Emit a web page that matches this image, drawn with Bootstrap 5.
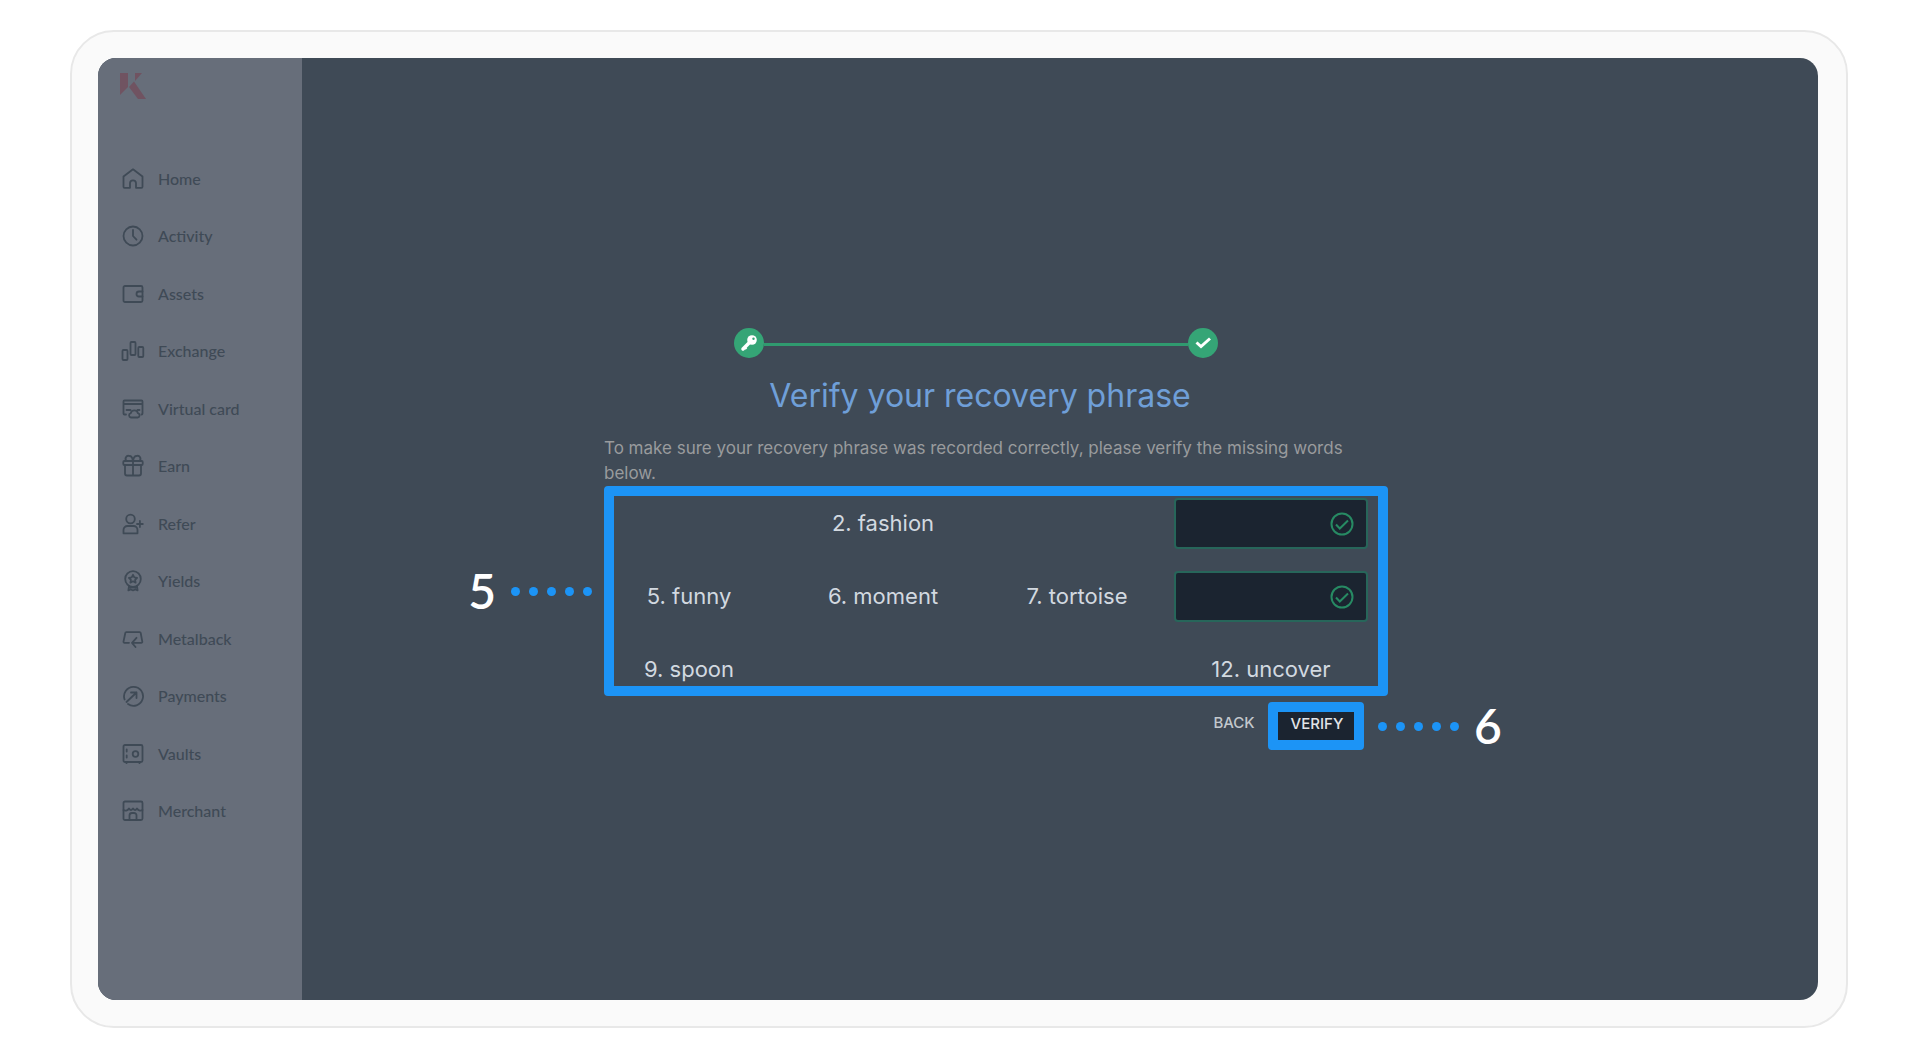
<!DOCTYPE html>
<html lang="en">
<head>
<meta charset="utf-8">
<meta name="viewport" content="width=device-width, initial-scale=1">
<title>Verify your recovery phrase</title>
<link href="https://cdn.jsdelivr.net/npm/bootstrap@5.3.0/dist/css/bootstrap.min.css" rel="stylesheet">
<style>
  body { background: #fff; font-family: Inter, "Open Sans", sans-serif; }
  .page { min-height: 100vh; padding: 30px 72px 30px 70px; }
  .device { border: 2px solid #e8e8e8; border-radius: 44px; background: #fafafa; padding: 26px 28px 26px 26px; }
  .screen { border-radius: 18px; background: #3f4a56; }
  .side { width: 204px; background: #676e7a; padding: 15px 22px; }
  .brand svg { width: 26px; height: 26px; display: block; }
  .side-nav { height: 690px; margin-top: 51px; padding-left: 1px; font: 500 16px/20px Lato, sans-serif; }
  .side-nav a { color: #3f4a56; gap: 13px; flex: 1 1 0; }
  .side-nav svg { width: 24px; height: 24px; fill: none; stroke: currentColor; stroke-width: 1.8; stroke-linecap: round; stroke-linejoin: round; }
  .stage { padding: 270px 160px 0 0; }
  .verify { width: 776px; }
  .steps { width: 484px; margin-left: 142px; }
  .step-dot { width: 30px; height: 30px; background: #35a576; }
  .step-dot svg { width: 18px; height: 18px; }
  .step-line { height: 3px; margin-top: 2px; background: #309a6f; }
  .verify h1 { font-size: 32px; line-height: 36px; font-weight: 400; color: #6f9fd8; margin: 20px 0 22px; }
  .intro { padding: 0 12px; margin-bottom: 12px; font-size: 17px; line-height: 25px; color: #999b9d; }
  .words { row-gap: 22px; font-size: 22px; color: #d2d9e0; }
  .word { height: 51px; }
  .word-input, .word-input:focus { height: 51px; border: 2px solid #27665a; border-radius: 4px; background: #1b2430; color: #d2d9e0; box-shadow: none; padding-right: 44px; }
  .word-ok { right: 14px; width: 24px; height: 24px; pointer-events: none; }
  .hl { border: 10px solid #1c94f6; border-radius: 4px; pointer-events: none; }
  .hl-words { inset: -12px -20px -1px 12px; }
  .hl-verify { inset: -4px -4px -8px -4px; }
  .callout { color: #fff; font: 600 48px/48px Lato, sans-serif; gap: 15px; top: 50%; transform: translateY(-50%); }
  .callout-start { right: 100%; margin-right: 22px; }
  .callout-end { left: 100%; margin-left: 24px; }
  .dots { gap: 9px; }
  .dots i { width: 9px; height: 9px; border-radius: 50%; background: #1c94f6; }
  .actions { margin-top: 11px; padding-right: 8px; gap: 10px; }
  .act { height: 34px; padding: 0; border: 0; border-radius: 3px; font-size: 15px; line-height: 34px; font-weight: 500; color: #c3c8cd; }
  .act-back { width: 56px; }
  .act-verify, .act-verify:hover { width: 88px; height: 36px; padding-left: 2px; background: #1b2430; color: #e2e5e8; }
</style>
</head>
<body>
<div class="page d-flex">
  <div class="device flex-grow-1 d-flex">
    <div class="screen flex-grow-1 d-flex overflow-hidden">
      <aside class="side flex-shrink-0">
        <a class="brand d-block" href="#" aria-label="Dashboard"><svg viewBox="0 0 26 26" fill="#705361"><path d="M0 0h8v14L0 22z"/><path d="M15 0h7l-7 8z"/><path d="M9 14l5-5.500L26 26h-8z"/></svg></a>
        <nav class="side-nav nav flex-column flex-nowrap" aria-label="Main">
          <a class="d-flex align-items-center text-decoration-none" href="#"><svg viewBox="0 0 24 24"><path d="M2.500 9.500L12 2.300l9.500 7.200v10.300a1 1 0 0 1-1 1H15v-4.500a3 3 0 0 0-6 0v4.500H3.500a1 1 0 0 1-1-1z"/></svg>Home</a>
          <a class="d-flex align-items-center text-decoration-none" href="#"><svg viewBox="0 0 24 24"><circle cx="12" cy="12" r="9.500"/><path d="M12 6v6l3.500 3.700"/></svg>Activity</a>
          <a class="d-flex align-items-center text-decoration-none" href="#"><svg viewBox="0 0 24 24"><rect x="2.500" y="4" width="19" height="16" rx="1.500"/><path d="M21.500 9.500H18a2.500 2.500 0 0 0 0 5h3.500"/></svg>Assets</a>
          <a class="d-flex align-items-center text-decoration-none" href="#"><svg viewBox="0 0 24 24"><rect x="1.500" y="11" width="5" height="10" rx="1"/><rect x="9.500" y="3" width="5" height="13" rx="1"/><rect x="17.300" y="8" width="5" height="10" rx="1"/></svg>Exchange</a>
          <a class="d-flex align-items-center text-decoration-none" href="#"><svg viewBox="0 0 24 24"><path d="M5 17.500H3.500a1 1 0 0 1-1-1V4.500a1 1 0 0 1 1-1h17a1 1 0 0 1 1 1v12a1 1 0 0 1-1 1M2.500 7h19M5.500 13h4M16.500 13h2"/><path d="M10 20.500a2.200 2.200 0 0 1-.3-4.300 3.800 3.800 0 0 1 7.300 0 2.200 2.200 0 0 1-.3 4.300z"/></svg>Virtual card</a>
          <a class="d-flex align-items-center text-decoration-none" href="#"><svg viewBox="0 0 24 24"><rect x="2.300" y="7" width="19.400" height="4" rx="1"/><path d="M4 11v8.500a2 2 0 0 0 2 2h12a2 2 0 0 0 2-2V11M12 7v14.500M12 7c-.5-3.500-1.500-5-3.500-5a2.900 2.900 0 0 0-2.800 5M12 7c.5-3.500 1.500-5 3.500-5a2.900 2.900 0 0 1 2.800 5"/></svg>Earn</a>
          <a class="d-flex align-items-center text-decoration-none" href="#"><svg viewBox="0 0 24 24"><circle cx="9.500" cy="7" r="4.300"/><path d="M2.500 21.300V18a4 4 0 0 1 4-4h6a4 4 0 0 1 4 4v3.300zM16 12h5.800M18.900 9v6"/></svg>Refer</a>
          <a class="d-flex align-items-center text-decoration-none" href="#"><svg viewBox="0 0 24 24"><circle cx="12" cy="10" r="7.800"/><path d="M12 5.800l1.300 2.600 2.800.4-2 2 .5 2.800-2.600-1.300-2.600 1.300.5-2.800-2-2 2.800-.4zM8 17l-.6 4.300 2.300-.8 2.300.8 2.300-.8 2.300.8L16 17M8.500 18.500h7"/></svg>Yields</a>
          <a class="d-flex align-items-center text-decoration-none" href="#"><svg viewBox="0 0 24 24"><path d="M8 15.800H3.500a1 1 0 0 1-1-1.200L4.300 6a1 1 0 0 1 1-.8h13.400a1 1 0 0 1 1 .8l1.600 8.600a1 1 0 0 1-1 1.200H11M14.500 20L11 15.800l4.500-5"/></svg>Metalback</a>
          <a class="d-flex align-items-center text-decoration-none" href="#"><svg viewBox="0 0 24 24"><path d="M3.600 15.500A9.500 9.500 0 1 1 7 20M5.500 18L15.500 8.500M10 8.500h5.500V14"/></svg>Payments</a>
          <a class="d-flex align-items-center text-decoration-none" href="#"><svg viewBox="0 0 24 24"><rect x="2.500" y="3" width="19" height="17" rx="1.500"/><circle cx="14.500" cy="12" r="2.800"/><path d="M5.700 7.500v2M5.700 13.500v2M5.500 20v1.200M18.500 20v1.200"/></svg>Vaults</a>
          <a class="d-flex align-items-center text-decoration-none" href="#"><svg viewBox="0 0 24 24"><rect x="2.500" y="2.500" width="19" height="18.500" rx="1.500"/><path d="M2.500 11c1.500 1 4 1 5.500-1.500 1.200 2 2.600 2 4 0 1.400 2 2.800 2 4 0 1.500 2.500 4 2.500 5.500 1.500M8.500 21v-4.500a2.500 2.500 0 0 1 2.500-2.500h2a2.500 2.500 0 0 1 2.500 2.500V21"/></svg>Merchant</a>
        </nav>
      </aside>
      <main class="stage flex-grow-1 d-flex justify-content-center align-items-start">
        <form class="verify">
          <div class="steps d-flex align-items-center">
            <span class="step-dot rounded-circle d-flex align-items-center justify-content-center"><svg viewBox="0 0 18 18"><path d="M3 15l7-7" stroke="#fff" stroke-width="3.500" stroke-linecap="round"/><path d="M5 15l1.500-1.500" stroke="#fff" stroke-width="2"/><circle cx="12" cy="6" r="4.800" fill="#fff"/><circle cx="13.500" cy="4.800" r="1.200" fill="#35a576"/></svg></span>
            <span class="step-line flex-grow-1"></span>
            <span class="step-dot rounded-circle d-flex align-items-center justify-content-center"><svg viewBox="0 0 18 18" fill="none" stroke="#fff" stroke-width="3"><path d="M2.500 8.500l4.500 4L16 4.500"/></svg></span>
          </div>
          <h1 class="text-center">Verify your recovery phrase</h1>
          <p class="intro">To make sure your recovery phrase was recorded correctly, please verify the missing words below.</p>
          <div class="position-relative">
            <div class="words row row-cols-4 gx-0">
              <div class="word"></div>
              <div class="word d-flex align-items-center justify-content-center">2. fashion</div>
              <div class="word"></div>
              <div class="word d-flex align-items-center position-relative">
                <input class="word-input form-control" type="text" aria-label="Word 4">
                <svg class="word-ok position-absolute" viewBox="0 0 24 24" fill="none" stroke="#278a63" stroke-width="2"><circle cx="12" cy="12" r="10.500"/><path d="M6 12.500l3.800 4L18 8.500"/></svg>
              </div>
              <div class="word d-flex align-items-center justify-content-center">5. funny</div>
              <div class="word d-flex align-items-center justify-content-center">6. moment</div>
              <div class="word d-flex align-items-center justify-content-center">7. tortoise</div>
              <div class="word d-flex align-items-center position-relative">
                <input class="word-input form-control" type="text" aria-label="Word 8">
                <svg class="word-ok position-absolute" viewBox="0 0 24 24" fill="none" stroke="#278a63" stroke-width="2"><circle cx="12" cy="12" r="10.500"/><path d="M6 12.500l3.800 4L18 8.500"/></svg>
              </div>
              <div class="word d-flex align-items-center justify-content-center">9. spoon</div>
              <div class="word"></div>
              <div class="word"></div>
              <div class="word d-flex align-items-center justify-content-center">12. uncover</div>
            </div>
            <div class="hl hl-words position-absolute">
              <div class="callout callout-start position-absolute d-flex align-items-center">5<span class="dots d-flex"><i></i><i></i><i></i><i></i><i></i></span></div>
            </div>
          </div>
          <div class="actions d-flex justify-content-end">
            <button class="act act-back btn" type="button">BACK</button>
            <div class="position-relative">
              <button class="act act-verify btn" type="submit">VERIFY</button>
              <div class="hl hl-verify position-absolute">
                <div class="callout callout-end position-absolute d-flex align-items-center"><span class="dots d-flex"><i></i><i></i><i></i><i></i><i></i></span>6</div>
              </div>
            </div>
          </div>
        </form>
      </main>
    </div>
  </div>
</div>
<script src="https://cdn.jsdelivr.net/npm/bootstrap@5.3.0/dist/js/bootstrap.bundle.min.js"></script>
</body>
</html>
